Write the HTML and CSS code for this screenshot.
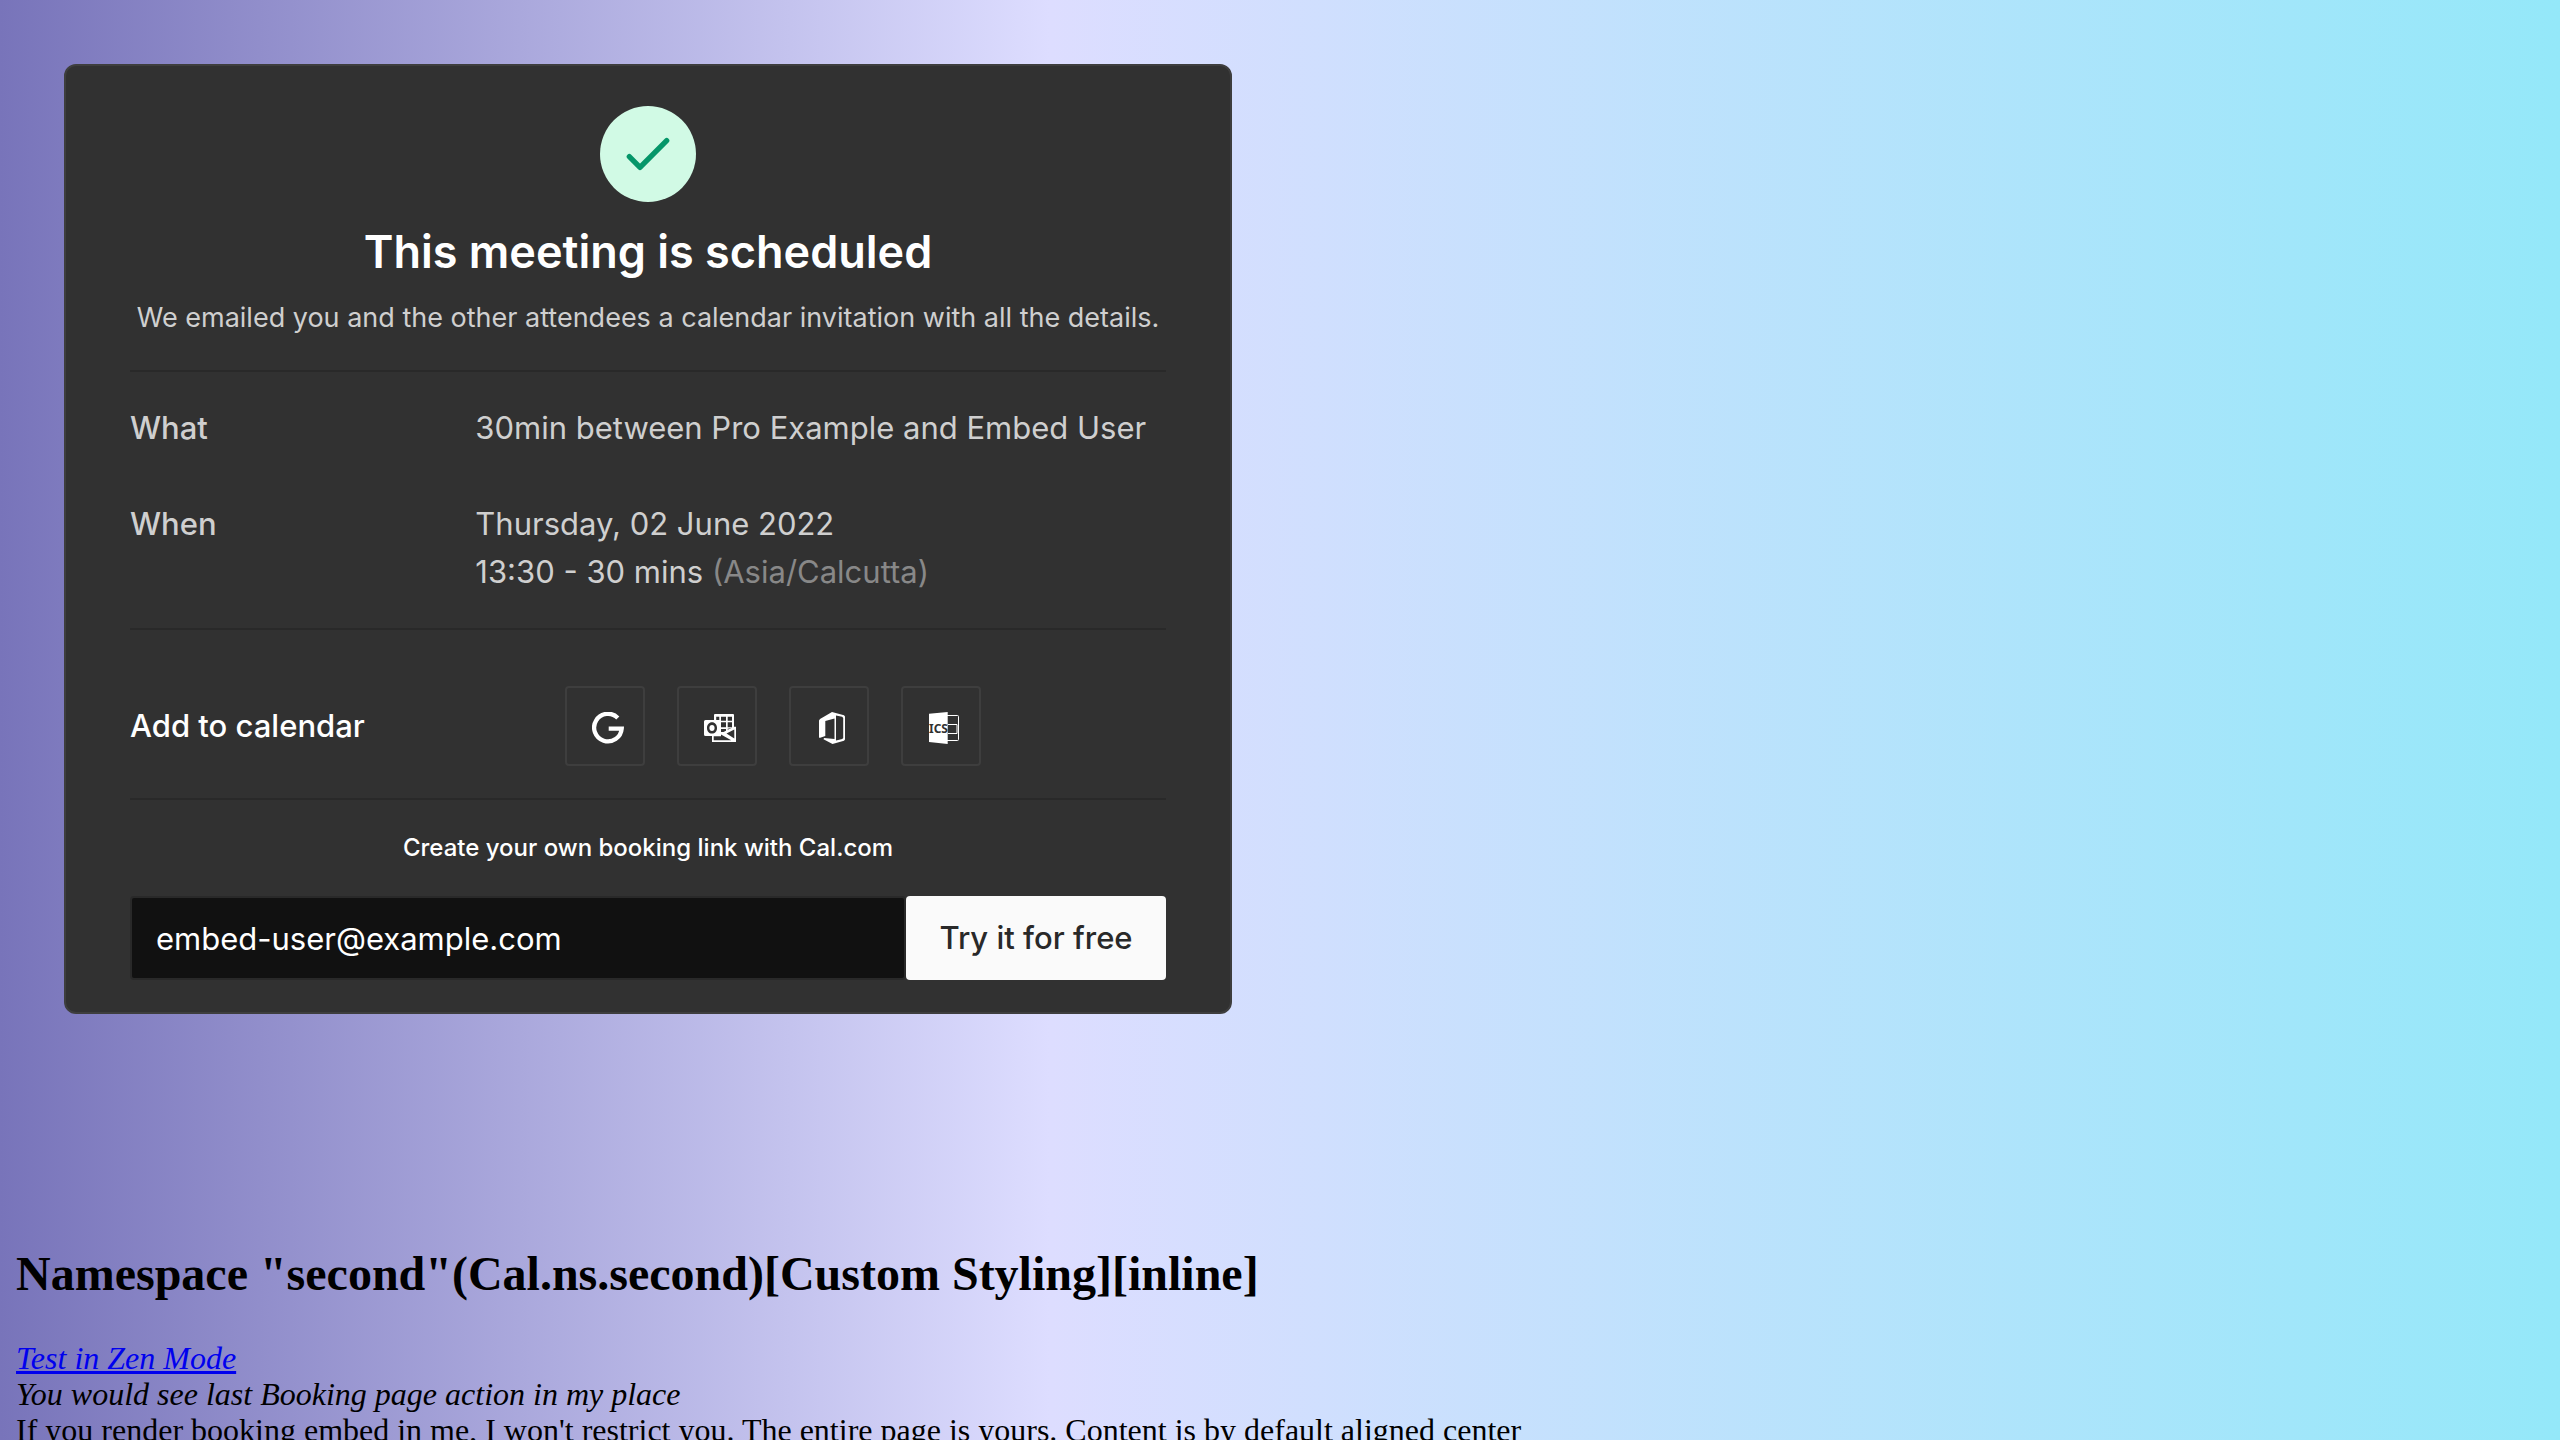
FILE: index.html
```html
<!DOCTYPE html>
<html lang="en">
<head>
<meta charset="utf-8">
<title>Embed Playground</title>
<link rel="stylesheet" href="styles.css">
</head>
<body>
<main class="booking">
  <section class="summary">
    <div class="badge">
      <svg class="check" viewBox="0 0 24 24" aria-hidden="true"><path d="M5 13l4 4L19 7"/></svg>
    </div>
    <h1 class="title">This meeting is scheduled</h1>
    <p class="subtitle">We emailed you and the other attendees a calendar invitation with all the details.</p>
  </section>
  <dl class="details">
    <dt>What</dt>
    <dd>30min between Pro Example and Embed User</dd>
    <dt>When</dt>
    <dd>Thursday, 02 June 2022<br>13:30 - 30 mins <span class="zone">(Asia/Calcutta)</span></dd>
  </dl>
  <section class="calendars">
    <h2 class="calendars-label">Add to calendar</h2>
    <nav class="calendar-links">
      <a class="calendar-link" href="#google" aria-label="Google">
        <svg class="icon" viewBox="0 0 32 32"><path fill="none" stroke="#fff" stroke-width="4.300" d="M25.8 5.900A13.800 13.800 0 1 0 29.700 16.600H16.700"/></svg>
      </a>
      <a class="calendar-link" href="#outlook" aria-label="Outlook">
        <svg class="icon" viewBox="0 0 32 32">
          <path fill="#fff" fill-rule="evenodd" d="M11 2h18q1 0 1 1v11.700h2V30H8v-6H1.500q-1.500 0-1.500-1.500V9.500Q0 8 1.500 8H10V3q0-1 1-1zM12.200 4.700V8H15.300V4.700zM17 4.700v4h5v-4zM23.700 4.700v4H28v-4zM17 10.300v5h5v-5zM23.700 10.300v5H28v-5zM17 17v3h2.500L22 18.700V17zM23.700 16.800v1L28 15.700zM8 10.300c-3 0-5 2.500-5 5.700s2 5.600 5 5.600 5-2.400 5-5.600-2-5.700-5-5.700zM8 13c1.600 0 2.600 1.200 2.600 3s-1 3-2.600 3-2.600-1.200-2.600-3 1-3 2.600-3zM9.700 24.300V28.300h17.500L17 22.500v1.800zM22.500 21.500l7.800 5V17.500z"/>
        </svg>
      </a>
      <a class="calendar-link" href="#office" aria-label="Office 365">
        <svg class="icon" viewBox="0 0 32 32">
          <path fill="#fff" fill-rule="evenodd" d="M3 8.500L4 7 16 0l12 3.300 1 1.200v23l-1 1.200L16.500 32 7.500 27.200 8 26l10.500 1V6.500L9.300 9v15L3.500 26 3 25zM20 3.500v25l6.200-1.500 1-1V6l-1-1.200z"/>
        </svg>
      </a>
      <a class="calendar-link" href="#ics" aria-label="ICS">
        <svg class="icon" viewBox="0 0 32 32">
          <path fill="none" stroke="#fff" d="M19 3.500h10.500q1 0 1 1v23q0 1-1 1H19M20 12.500h9v9h-9"/>
          <path fill="#fff" d="M1 1.700L19.700 0v32L1 30z"/>
          <text class="ics" x="1" y="21">ICS</text>
        </svg>
      </a>
    </nav>
  </section>
  <form class="signup" action="#signup">
    <label class="signup-label" for="email">Create your own booking link with Cal.com</label>
    <div class="signup-row">
      <input class="email" id="email" type="email" value="embed-user@example.com">
      <button class="submit" type="submit">Try it for free</button>
    </div>
  </form>
</main>
<section class="namespace">
  <h2 class="namespace-title">Namespace "second"(Cal.ns.second)[Custom Styling][inline]</h2>
  <i class="note"><a href="#zen">Test in Zen Mode</a></i>
  <i class="note">You would see last Booking page action in my place</i>
  <div>If you render booking embed in me, I won't restrict you. The entire page is yours. Content is by default aligned center</div>
</section>
</body>
</html>
```
FILE: styles.css
```css
* {
  box-sizing: border-box;
}

html {
  min-height: 100%;
  background: linear-gradient(90deg, rgb(120, 116, 186) 0%, rgb(221, 221, 255) 41%, rgb(148, 232, 249) 100%);
}

body {
  margin: 0;
  height: 100vh;
  overflow: hidden;
  padding: 64px 16px 0;
  font: 32px/36px "Liberation Serif", "Times New Roman", serif;
  color: #000;
}

.booking {
  max-width: 1168px;
  margin-left: 48px;
  padding: 40px 64px 32px;
  border: 2px solid #3e3e3e;
  border-radius: 12px;
  background: #313131;
  color: #fff;
  font: 31px/48px Inter, "Liberation Sans", sans-serif;
}

.summary {
  display: flex;
  flex-direction: column;
  align-items: center;
  padding-bottom: 32px;
  border-bottom: 2px solid #292929;
}

.badge {
  display: grid;
  place-items: center;
  width: 96px;
  height: 96px;
  border-radius: 50%;
  background: #d1fae5;
}

.check {
  width: 64px;
  height: 64px;
  fill: none;
  stroke: #059669;
  stroke-width: 2;
  stroke-linecap: round;
  stroke-linejoin: round;
}

.title {
  margin: 18px 0 0;
  font-size: 45px;
  line-height: 64px;
  font-weight: 600;
}

.subtitle {
  margin: 14px 0 0;
  font-size: 27px;
  line-height: 40px;
  color: #cfcfcf;
}

.details {
  display: grid;
  grid-template-columns: 1fr 2fr;
  row-gap: 48px;
  margin: 0;
  padding: 32px 0;
  border-bottom: 2px solid #292929;
  color: #cfcfcf;
}

.details dt {
  font-weight: 500;
}

.details dd {
  margin: 0;
}

.zone {
  color: #888;
}

.calendars {
  display: grid;
  grid-template-columns: 435px 1fr;
  align-items: center;
  padding: 56px 0 32px;
  border-bottom: 2px solid #292929;
}

.calendars-label {
  margin: 0;
  font-size: 31px;
  font-weight: 500;
}

.calendar-links {
  display: flex;
  gap: 32px;
}

.calendar-link {
  display: grid;
  place-items: center;
  width: 80px;
  height: 80px;
  padding: 4px 0 0 6px;
  border: 2px solid #3e3e3e;
  border-radius: 4px;
}

.icon {
  width: 32px;
  height: 32px;
}

.ics {
  font: 700 12px "Noto Sans", sans-serif;
  fill: #313131;
}

.signup-label {
  display: block;
  padding: 32px 0;
  font-size: 24px;
  line-height: 32px;
  font-weight: 500;
  text-align: center;
}

.signup-row {
  display: flex;
}

.email {
  flex: 1;
  min-width: 0;
  height: 84px;
  padding: 0 24px;
  border: 2px solid #292929;
  border-radius: 4px;
  background: #111;
  color: #fff;
  font: inherit;
}

.submit {
  width: 260px;
  height: 84px;
  padding: 0;
  border: 0;
  border-radius: 4px;
  background: #fafafa;
  color: #292929;
  font: inherit;
  font-weight: 500;
}

.namespace-title {
  margin: 232px 0 38px;
  font-size: 48px;
  line-height: 56px;
}

.note {
  display: block;
}

.note a {
  color: #00e;
}
```
